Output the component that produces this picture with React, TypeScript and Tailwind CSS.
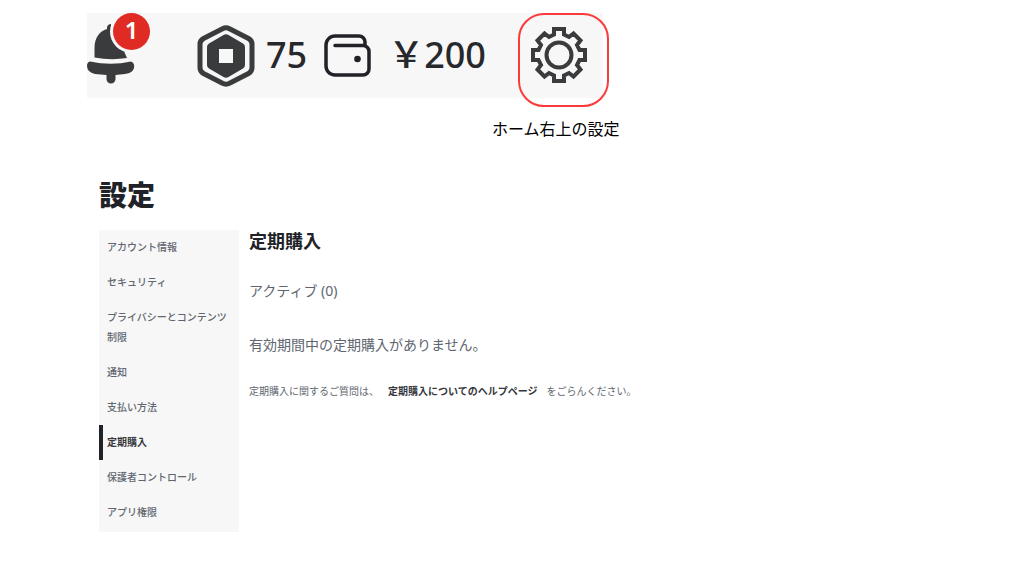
import type { ReactNode } from "react";

const MENU = [
  { id: "account", label: "アカウント情報" },
  { id: "security", label: "セキュリティ" },
  { id: "privacy", label: "プライバシーとコンテンツ制限" },
  { id: "notifications", label: "通知" },
  { id: "payment", label: "支払い方法" },
  { id: "subscriptions", label: "定期購入" },
  { id: "parental", label: "保護者コントロール" },
  { id: "apps", label: "アプリ権限" },
];

export default function App() {
  return (
    <div className="min-h-screen bg-white pt-[13px] font-['Noto_Sans','Noto_Sans_CJK_JP',sans-serif] text-[#606670]">
      <TopBar />
      <main className="mt-[34px] pl-[99px] pr-8">
        <h1 className="text-[28px] leading-10 font-black text-[#202227]">設定</h1>
        <div className="mt-[15px] flex items-start gap-[10px]">
          <SideMenu current="subscriptions" />
          <Subscriptions />
        </div>
      </main>
    </div>
  );
}

function TopBar() {
  return (
    <header className="pl-[87px]">
      <div className="flex h-[85px] w-fit items-center bg-[#f7f7f7] text-[36px] font-medium text-[#26282c]">
        <button aria-label="通知" className="relative mt-[11px] self-start">
          <BellIcon className="h-[60px] w-[50px]" />
          <span className="absolute -top-[11px] left-[26px] flex size-[37px] items-center justify-center rounded-full bg-[#e02b25] pb-1 text-2xl leading-none font-semibold text-white ring-3 ring-[#f7f7f7]">
            1
          </span>
        </button>
        <Balance
          icon={<RobuxIcon className="h-16 w-[60px]" />}
          className="ml-[59px] gap-[10px]"
        >
          75
        </Balance>
        <Balance
          icon={<WalletIcon className="h-[46px] w-[50px]" />}
          className="ml-[15px] gap-4"
        >
          ￥200
        </Balance>
        <button
          aria-label="設定"
          className="ml-8 -mr-[6px] flex h-[94px] w-[91px] items-start self-start rounded-[26px] border-2 border-[#fb3a3a] pt-[10px] pl-[9px]"
        >
          <GearIcon className="size-[60px]" />
        </button>
      </div>
      <p className="mt-[19px] pl-[405px] text-base leading-6 text-black">
        ホーム右上の設定
      </p>
    </header>
  );
}

function Balance({
  icon,
  className,
  children,
}: {
  icon: ReactNode;
  className: string;
  children: ReactNode;
}) {
  return (
    <div className={`flex items-center ${className}`}>
      {icon}
      <span className="pb-0.5 leading-10">{children}</span>
    </div>
  );
}

function SideMenu({ current }: { current: string }) {
  return (
    <nav className="w-35 shrink-0 bg-[#f7f7f7] pb-0.5">
      <ul>
        {MENU.map((item) => {
          const active = item.id === current;
          return (
            <li key={item.id}>
              <a
                href={`#${item.id}`}
                aria-current={active ? "page" : undefined}
                className={`block border-l-4 pt-[7px] pr-2 pb-2 pl-1 text-[10px] leading-5 ${
                  active
                    ? "border-[#202227] font-bold text-[#35373c]"
                    : "border-transparent font-medium"
                }`}
              >
                {item.label}
              </a>
            </li>
          );
        })}
      </ul>
    </nav>
  );
}

function Subscriptions() {
  return (
    <section>
      <h2 className="text-lg leading-[22px] font-bold text-[#202227]">定期購入</h2>
      <p className="mt-[29px] text-sm leading-5">アクティブ (0)</p>
      <p className="mt-8 text-sm leading-6">有効期間中の定期購入がありません。</p>
      <p className="mt-6 text-[10px] leading-5">
        定期購入に関するご質問は、
        <a href="#help" className="mx-[9px] font-bold text-[#35373c]">
          定期購入についてのヘルプページ
        </a>
        をごらんください。
      </p>
    </section>
  );
}

function BellIcon({ className }: { className?: string }) {
  return (
    <svg viewBox="0 0 50 60" fill="#393b3d" className={className} aria-hidden>
      <path d="M7.5 33.5V24C7.5 13 13 7 20 5V3q1-3 4-3v5C33 8 37 16 37 24q0 5 3 10-16 2.500-32.500-.5z" />
      <path d="M3 37.500Q24 42 44 37.500 48 39 47 44 46 49 38 50L28.500 51V55a4.500 4.500 0 0 1-9 0V51L8 50Q0 48 0 42q0-4 3-4.500z" />
    </svg>
  );
}

function RobuxIcon({ className }: { className?: string }) {
  return (
    <svg viewBox="-30 -32 60 64" className={className} aria-hidden>
      <path
        d="M-3.500-27.300Q0-29 3.500-27.300L22.500-17.500Q26-15.500 26-12V12Q26 15.500 22.500 17.500L3.500 27.300Q0 29-3.500 27.300L-22.500 17.500Q-26 15.500-26 12V-12Q-26-15.500-22.500-17.500z"
        fill="none"
        stroke="#393b3d"
        strokeWidth={5}
      />
      <path
        d="M-2.500-21Q0-22.500 2.500-21L17-12.500Q19-11.500 19-9V9Q19 11.500 17 12.500L2.500 21Q0 22.500-2.500 21L-17 12.500Q-19 11.500-19 9V-9Q-19-11.500-17-12.500zM-7-7V7H7V-7z"
        fill="#393b3d"
        fillRule="evenodd"
      />
    </svg>
  );
}

function WalletIcon({ className }: { className?: string }) {
  return (
    <svg viewBox="0 0 50 46" className={className} aria-hidden>
      <path
        d="M13 12.500H41a6 6 0 0 1 6 6V36a6 6 0 0 1-6 6H13a9 9 0 0 1-9-9V12a9 9 0 0 1 9-9H37a6 6 0 0 1 6 6v4"
        fill="none"
        stroke="#202227"
        strokeWidth={3.5}
        strokeLinecap="round"
      />
      <circle cx={35.5} cy={26} r={3.3} fill="#202227" />
    </svg>
  );
}

function GearIcon({ className }: { className?: string }) {
  return (
    <svg
      viewBox="-30 -30 60 60"
      fill="none"
      stroke="#393b3d"
      strokeWidth={4}
      className={className}
      aria-hidden
    >
      <path d="M-5-26H5V-20.500L10-18 14.500-21.500 21.500-14.500 18-10 20.500-5H26V5H20.500L18 10 21.500 14.500 14.500 21.500 10 18 5 20.500V26H-5V20.500L-10 18-14.500 21.500-21.500 14.500-18 10-20.500 5H-26V-5H-20.500L-18-10-21.500-14.500-14.500-21.500-10-18-5-20.500z" />
      <circle r={12.5} />
    </svg>
  );
}
